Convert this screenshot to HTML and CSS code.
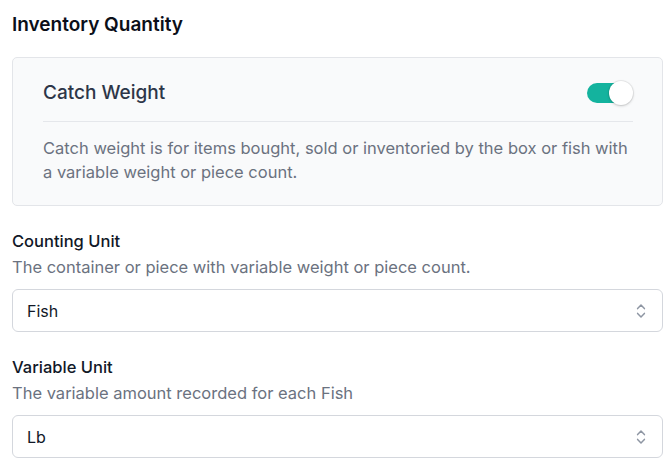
FILE: index.html
```html
<!DOCTYPE html>
<html lang="en">
<head>
<meta charset="utf-8">
<link rel="stylesheet" href="styles.css">
</head>
<body>
<main class="page">
  <h2 class="heading">Inventory Quantity</h2>
  <section class="card">
    <div class="card-row">
      <h3 class="card-title">Catch Weight</h3>
      <span class="toggle"><span class="knob"></span></span>
    </div>
    <hr class="divider">
    <p class="card-desc">Catch weight is for items bought, sold or inventoried by the box or fish with a variable weight or piece count.</p>
  </section>
  <div class="field">
    <div class="label">Counting Unit</div>
    <div class="hint">The container or piece with variable weight or piece count.</div>
    <div class="select">
      <span class="value">Fish</span>
      <svg class="chev" viewBox="0 0 10 18" width="10" height="18"><path d="M1.6 6.6 L5 3.1 L8.4 6.6 M1.6 11.4 L5 14.9 L8.4 11.4" fill="none" stroke="currentColor" stroke-width="1.5" stroke-linecap="round" stroke-linejoin="round"/></svg>
    </div>
  </div>
  <div class="field">
    <div class="label">Variable Unit</div>
    <div class="hint">The variable amount recorded for each Fish</div>
    <div class="select">
      <span class="value">Lb</span>
      <svg class="chev" viewBox="0 0 10 18" width="10" height="18"><path d="M1.6 6.6 L5 3.1 L8.4 6.6 M1.6 11.4 L5 14.9 L8.4 11.4" fill="none" stroke="currentColor" stroke-width="1.5" stroke-linecap="round" stroke-linejoin="round"/></svg>
    </div>
  </div>
</main>
</body>
</html>
```
FILE: styles.css
```css
* { box-sizing: border-box; }
html, body { margin: 0; background: #ffffff; }
body {
  font-family: Inter, "Noto Sans", "Liberation Sans", sans-serif;
  color: #111827;
}
.page {
  padding: 11px 7px 0 12px;
}
.heading {
  margin: 0;
  font-size: 19px;
  line-height: 28px;
  font-weight: 600;
  color: #0b0f19;
}
.card {
  margin-top: 18px;
  background: #f9fafb;
  border: 1px solid #e3e5e9;
  border-radius: 5px;
  padding: 20px 29px 21px 30px;
}
.card-row {
  display: flex;
  align-items: center;
  justify-content: space-between;
  height: 28px;
  margin-top: 1px;
}
.card-title {
  margin: 0;
  font-size: 19px;
  line-height: 28px;
  font-weight: 500;
  color: #2d3648;
}
.toggle {
  position: relative;
  width: 46px;
  height: 20px;
}
.toggle::before {
  content: "";
  position: absolute;
  left: 0;
  top: 0;
  width: 44px;
  height: 20px;
  border-radius: 10px;
  background: #14b39e;
}
.knob {
  position: absolute;
  right: 0;
  top: -2px;
  width: 24px;
  height: 24px;
  border-radius: 50%;
  background: #ffffff;
  box-shadow: 0 0 0 1px rgba(0,0,0,0.06), 0 1px 3px rgba(0,0,0,0.18);
}
.divider {
  margin: 14px 0 0;
  border: 0;
  border-top: 1px solid #e5e7eb;
}
.card-desc {
  margin: 14px 0 0;
  font-size: 16.5px;
  line-height: 24px;
  color: #6b7280;
}
.field {
  margin-top: 23px;
}
.label {
  font-size: 16.5px;
  line-height: 24px;
  font-weight: 500;
  color: #111827;
}
.hint {
  margin-top: 2px;
  font-size: 16.5px;
  line-height: 24px;
  color: #6b7280;
}
.select {
  margin-top: 10px;
  height: 43px;
  display: flex;
  align-items: center;
  justify-content: space-between;
  padding: 0 16px 0 14px;
  background: #ffffff;
  border: 1px solid #d4d7dd;
  border-radius: 6px;
}
.value {
  font-size: 16px;
  color: #111827;
}
.chev {
  color: #8e96a3;
  display: block;
}
```
